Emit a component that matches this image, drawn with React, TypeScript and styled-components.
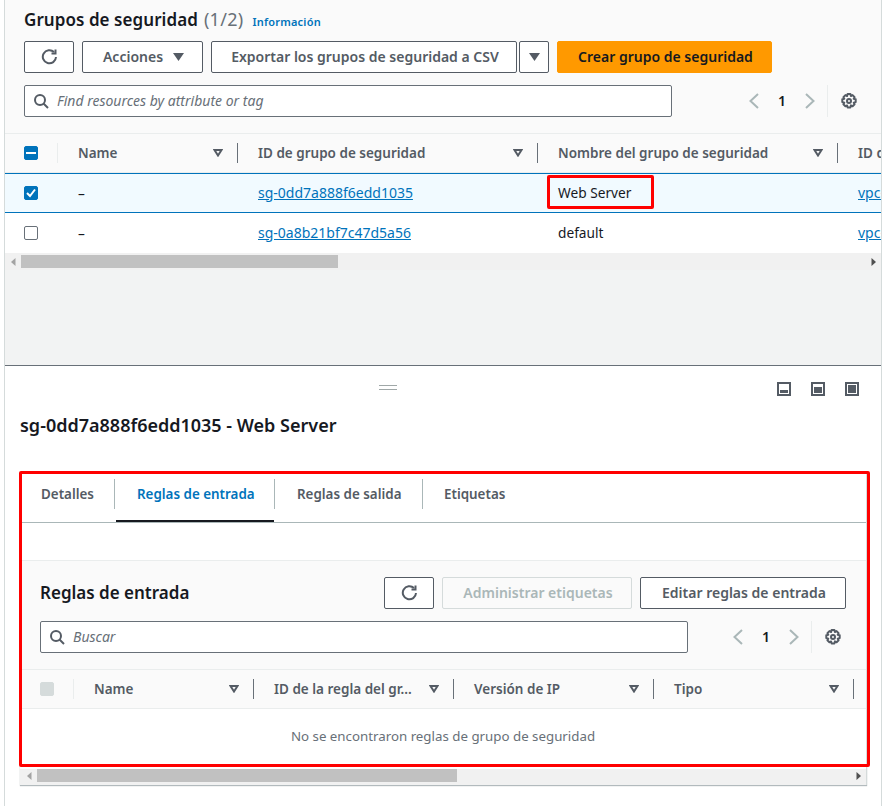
import * as React from 'react';
import styled, { createGlobalStyle } from 'styled-components';

const GlobalStyle = createGlobalStyle`
  html, body {
    margin: 0;
    padding: 0;
    background: #fff;
    font-family: "Noto Sans", "Open Sans", sans-serif;
    font-size: 14px;
    color: #16191f;
  }
`;

const Shell = styled.div`
  box-sizing: border-box;
  width: 878px;
  height: 806px;
  margin-left: 4px;
  border-left: 1px solid #d5dbdb;
  border-right: 1px solid #d5dbdb;
  overflow: hidden;
`;

const TopPanel = styled.section`
  display: flex;
  flex-direction: column;
  height: 365px;
  background: #f2f3f3;
`;

const Toolbar = styled.div`
  box-sizing: border-box;
  height: 133px;
  padding: 8px 24px 0 19px;
  background: #fafafa;
`;

const HeadingRow = styled.div`
  display: flex;
  align-items: baseline;
  height: 33px;
  line-height: 22px;
`;

const PageTitle = styled.h1`
  margin: 0;
  font-size: 17px;
  font-weight: 600;
  letter-spacing: 0.06px;
`;

const Count = styled.span`
  margin-left: 6px;
  font-size: 18px;
  letter-spacing: 0.3px;
  color: #687078;
`;

const InfoLink = styled.a`
  margin-left: 9px;
  font-size: 11px;
  font-weight: 600;
  letter-spacing: 0.2px;
  color: #0073bb;
`;

const ButtonRow = styled.div`
  display: flex;
  gap: 8px;
`;

const Button = styled.button<{ $width: number; $variant?: 'primary' | 'disabled' }>`
  box-sizing: border-box;
  display: inline-flex;
  align-items: center;
  justify-content: center;
  gap: 10px;
  width: ${(p) => p.$width}px;
  height: 32px;
  padding: 0;
  border: 1px solid ${(p) => (p.$variant === 'primary' ? '#ff9900' : p.$variant === 'disabled' ? '#d5dbdb' : '#545b64')};
  border-radius: 2px;
  background: ${(p) => (p.$variant === 'primary' ? '#ff9900' : p.$variant === 'disabled' ? '#fafafa' : '#fff')};
  color: ${(p) => (p.$variant === 'primary' ? '#16191f' : p.$variant === 'disabled' ? '#aab7b8' : '#545b64')};
  font-family: inherit;
  font-size: 14px;
  font-weight: 600;
`;

const ButtonLabel = styled.span`
  margin: 0 0 2px 2px;
`;

const SplitCaret = styled(Button)`
  margin-left: -6px;
`;

const SearchRow = styled.div<{ $end: number }>`
  display: flex;
  align-items: center;
  justify-content: space-between;
  height: 32px;
  margin-top: 12px;
  padding-right: ${(p) => p.$end}px;
`;

const SearchBox = styled.div`
  box-sizing: border-box;
  display: flex;
  align-items: center;
  gap: 8px;
  width: 648px;
  height: 32px;
  padding-left: 8px;
  border: 1px solid #687078;
  border-radius: 2px;
  background: #fff;
  font-size: 14px;
  font-style: italic;
  color: #687078;
`;

const Placeholder = styled.span`
  margin-bottom: 2px;
`;

const Pager = styled.div`
  display: flex;
  align-items: center;
  height: 32px;
  color: #aab7b8;
`;

const PageNumber = styled.span`
  width: 46px;
  margin-bottom: 2px;
  text-align: center;
  font-size: 14px;
  font-weight: 600;
  color: #16191f;
`;

const PagerDivider = styled.span`
  width: 1px;
  height: 32px;
  margin: 0 13px 0 12px;
  background: #eaeded;
`;

const Table = styled.table`
  width: 100%;
  border-collapse: separate;
  border-spacing: 0;
  table-layout: fixed;
`;

const Col = styled.col<{ $width: number }>`
  width: ${(p) => p.$width}px;
`;

const TopTableWrap = styled.div`
  margin-left: -1px;
`;

const Th = styled.th`
  box-sizing: border-box;
  height: 40px;
  padding: 0;
  border-top: 1px solid #eaeded;
  border-bottom: 1px solid #eaeded;
  background: #fafafa;
  font-size: 13.5px;
  font-weight: 600;
  text-align: left;
  color: #545b64;

  &:first-child {
    padding-left: 20px;
  }
`;

const TopFirstTh = styled(Th)`
  border-left: 1px solid #d5dbdb;

  &:first-child {
    padding-left: 19px;
  }
`;

const HeadCell = styled.div<{ $soft?: boolean; $bare?: boolean }>`
  box-sizing: border-box;
  display: flex;
  align-items: center;
  justify-content: space-between;
  height: 20px;
  padding: 0 14px 0 20px;
  border-right: ${(p) => (p.$bare ? '0' : `1px solid ${p.$soft ? '#eaeded' : '#687078'}`)};
  white-space: nowrap;
  overflow: hidden;
`;

const CheckCell = styled(HeadCell)`
  padding: 0;
`;

const Tr = styled.tr<{ $selected?: boolean }>`
  background: ${(p) => (p.$selected ? '#f1faff' : '#fff')};
`;

const Td = styled.td<{ $selected?: boolean }>`
  box-sizing: border-box;
  height: 40px;
  padding: 0 0 2px 20px;
  border-top: 1px solid ${(p) => (p.$selected ? '#0073bb' : 'transparent')};
  border-bottom: 1px solid ${(p) => (p.$selected ? '#0073bb' : 'transparent')};
  font-size: 13.7px;
  white-space: nowrap;
  overflow: hidden;
`;

const DashTd = styled(Td)`
  padding-bottom: 0;
`;

const CheckTd = styled(Td)`
  padding: 0 0 0 19px;
  border-left: 1px solid ${(p) => (p.$selected ? '#0073bb' : '#d5dbdb')};
  line-height: 0;
`;

const RowLink = styled.a`
  font-size: 14px;
  color: #0073bb;
  text-decoration: underline;
`;

const HighlightAnchor = styled.span`
  position: relative;
  display: inline-block;
`;

const HighlightBox = styled.span`
  position: absolute;
  left: -11px;
  top: -8px;
  box-sizing: border-box;
  width: 107px;
  height: 34px;
  border: 3px solid #ff0000;
  border-radius: 2px;
`;

const Box = styled.span<{ $state: 'on' | 'mixed' | 'off' | 'disabled' }>`
  box-sizing: border-box;
  display: inline-flex;
  align-items: center;
  justify-content: center;
  width: 14px;
  height: 14px;
  border-radius: 2px;
  border: 1px solid
    ${(p) => (p.$state === 'off' ? '#687078' : p.$state === 'disabled' ? '#d5dbdb' : '#0073bb')};
  background: ${(p) => (p.$state === 'off' ? '#fff' : p.$state === 'disabled' ? '#d5dbdb' : '#0073bb')};
`;

const ScrollTrack = styled.div<{ $compact?: boolean }>`
  box-sizing: border-box;
  display: flex;
  align-items: center;
  justify-content: space-between;
  height: ${(p) => (p.$compact ? 16 : 17)}px;
  padding: ${(p) => (p.$compact ? '0 0 3px 1px' : '0')};
  background: #f1f1f1;
`;

const ScrollArrow = styled.span<{ $dim?: boolean }>`
  display: flex;
  justify-content: center;
  width: 16px;
  color: ${(p) => (p.$dim ? '#a3a3a3' : '#505050')};
`;

const ScrollThumb = styled.span<{ $width: number }>`
  width: ${(p) => p.$width}px;
  height: 13px;
  margin-right: auto;
  background: #c1c1c1;
`;

const BottomPanel = styled.section`
  box-sizing: border-box;
  height: 441px;
  border-top: 1px solid #687078;
  background: #fff;
`;

const PanelControls = styled.div`
  display: flex;
  align-items: center;
  justify-content: space-between;
  height: 14px;
  padding: 16px 22px 0 374px;
`;

const DragHandle = styled.span`
  width: 18px;
  height: 3px;
  border-top: 1px solid #a0a8a8;
  border-bottom: 1px solid #a0a8a8;
  margin-top: -4px;
`;

const PanelIcons = styled.div`
  display: flex;
  gap: 20px;
`;

const DetailTitle = styled.h2`
  margin: 18px 0 36px 15px;
  font-size: 18px;
  line-height: 22px;
  font-weight: 600;
`;

const Card = styled.div`
  position: relative;
  width: 846px;
  margin-left: 15px;
  border-right: 1px solid #d5dbdb;
  box-shadow: 0 1px 1px rgba(0, 28, 36, 0.3);
`;

const CardHighlight = styled.div`
  position: absolute;
  top: -1px;
  left: -1px;
  right: -4px;
  bottom: 18px;
  border: 3px solid #ff0000;
  border-radius: 2px;
  pointer-events: none;
`;

const TabList = styled.div`
  box-sizing: border-box;
  display: flex;
  height: 51px;
  border-bottom: 1px solid #aab7b8;
`;

const Tab = styled.div<{ $width: number; $active?: boolean; $last?: boolean }>`
  position: relative;
  box-sizing: border-box;
  width: ${(p) => p.$width}px;
  padding: 14px 0 0 ${(p) => (p.$last ? 21 : 22)}px;
  font-size: 13.4px;
  font-weight: 600;
  line-height: 17px;
  color: ${(p) => (p.$active ? '#0073bb' : '#545b64')};

  &:first-child {
    padding-left: 21px;
  }

  &::after {
    content: '';
    display: ${(p) => (p.$last ? 'none' : 'block')};
    position: absolute;
    top: 7px;
    right: 0;
    width: 1px;
    height: 30px;
    background: #aab7b8;
  }

  &::before {
    content: '';
    display: ${(p) => (p.$active ? 'block' : 'none')};
    position: absolute;
    left: 1px;
    right: 1px;
    bottom: 0;
    height: 2px;
    background: #16191f;
  }
`;

const TabGap = styled.div`
  height: 37px;
`;

const RulesHeader = styled.div`
  box-sizing: border-box;
  height: 109px;
  padding: 16px 0 0 20px;
  border-top: 1px solid #eaeded;
  background: #fafafa;
`;

const RulesTop = styled.div`
  display: flex;
  align-items: center;
  justify-content: space-between;
  padding-right: 20px;
`;

const RulesTitle = styled.h3`
  margin: 0;
  padding-bottom: 2px;
  font-size: 17px;
  font-weight: 600;
`;

const EmptyCell = styled.td`
  box-sizing: border-box;
  height: 60px;
  padding: 0 0 7px;
  text-align: center;
  font-size: 13.3px;
  color: #687078;
`;

const Refresh = () => (
  <svg width="16" height="16" viewBox="0 0 16 16" fill="none" stroke="currentColor" strokeWidth="2">
    <path d="M13 3a6.6 6.600 0 1 0 2 5" />
    <path d="M14.500 0.500V4.500H10.500" strokeLinejoin="miter" />
  </svg>
);

const Caret = () => (
  <svg width="11" height="8" viewBox="0 0 11 8" fill="currentColor">
    <path d="M0 0h11L5.500 8z" />
  </svg>
);

const Magnifier = () => (
  <svg width="16" height="16" viewBox="0 0 16 16" fill="none" stroke="#545b64" strokeWidth="2">
    <circle cx="7" cy="7" r="5" />
    <path d="M10.500 10.500L15 15" />
  </svg>
);

const Chevron = ({ right }: { right?: boolean }) => (
  <svg width="10" height="16" viewBox="0 0 10 16" fill="none" stroke="currentColor" strokeWidth="2">
    <path d={right ? 'M1 1l7.500 7L1 15' : 'M9 1L1.500 8 9 15'} />
  </svg>
);

const Gear = () => (
  <svg width="16" height="16" viewBox="0 0 16 16" fill="none" stroke="#545b64" strokeWidth="2" strokeLinejoin="round">
    <circle cx="8" cy="8" r="2" />
    <path d="M6.600 1h2.800l.5 2 1.700-.9 2 2-.9 1.700 2 .5v2.800l-2 .5.9 1.700-2 2-1.700-.9-.5 2H6.600l-.5-2-1.700.9-2-2 .9-1.700-2-.5V6.300l2-.5-.9-1.700 2-2 1.700.9z" />
  </svg>
);

const SortIcon = () => (
  <svg width="10" height="8" viewBox="0 0 10 8" fill="none" stroke="#545b64" strokeWidth="2">
    <path d="M1.500 1h7L5 6.500z" />
  </svg>
);

const Check = () => (
  <svg width="10" height="10" viewBox="0 0 10 10" fill="none" stroke="#fff" strokeWidth="2">
    <path d="M1 5l3 3 5-6.500" />
  </svg>
);

const Dash = () => (
  <svg width="10" height="2" viewBox="0 0 10 2" fill="#fff">
    <path d="M0 0h10v2H0z" />
  </svg>
);

const PanelIcon = ({ fill }: { fill: 'low' | 'mid' | 'full' }) => {
  const top = fill === 'low' ? 8 : fill === 'mid' ? 5 : 3;
  return (
    <svg width="14" height="14" viewBox="0 0 14 14" fill="#545b64">
      <path fillRule="evenodd" d="M0 0h14v14H0zM2 2v10h10V2z" />
      <rect x="3" y={top} width="8" height={11 - top} />
    </svg>
  );
};

const ArrowLeft = () => (
  <svg width="5" height="8" viewBox="0 0 5 8" fill="currentColor">
    <path d="M4.500 0v8L0 4z" />
  </svg>
);

const ArrowRight = () => (
  <svg width="5" height="8" viewBox="0 0 5 8" fill="currentColor">
    <path d="M0.500 0v8L5 4z" />
  </svg>
);

const PagerBlock = () => (
  <Pager>
    <Chevron />
    <PageNumber>1</PageNumber>
    <Chevron right />
    <PagerDivider />
    <Gear />
  </Pager>
);

const HeadLabel = ({ label }: { label: string }) => (
  <HeadCell>
    <span>{label}</span>
    <SortIcon />
  </HeadCell>
);

const groups = [
  { id: 'sg-0dd7a888f6edd1035', name: 'Web Server', selected: true },
  { id: 'sg-0a8b21bf7c47d5a56', name: 'default', selected: false },
];

export default function App() {
  return (
    <>
      <GlobalStyle />
      <Shell>
        <TopPanel>
          <Toolbar>
            <HeadingRow>
              <PageTitle>Grupos de seguridad</PageTitle>
              <Count>(1/2)</Count>
              <InfoLink>Información</InfoLink>
            </HeadingRow>
            <ButtonRow>
              <Button $width={50}><Refresh /></Button>
              <Button $width={121}><ButtonLabel>Acciones</ButtonLabel> <Caret /></Button>
              <Button $width={306}><ButtonLabel>Exportar los grupos de seguridad a CSV</ButtonLabel></Button>
              <SplitCaret $width={30}><Caret /></SplitCaret>
              <Button $width={215} $variant="primary"><ButtonLabel>Crear grupo de seguridad</ButtonLabel></Button>
            </ButtonRow>
            <SearchRow $end={0}>
              <SearchBox><Magnifier /><Placeholder>Find resources by attribute or tag</Placeholder></SearchBox>
              <PagerBlock />
            </SearchRow>
          </Toolbar>
          <TopTableWrap>
            <Table>
              <colgroup>
                <Col $width={54} />
                <Col $width={180} />
                <Col $width={300} />
                <Col $width={300} />
                <col />
              </colgroup>
              <thead>
                <tr>
                  <TopFirstTh>
                    <CheckCell $soft><Box $state="mixed"><Dash /></Box></CheckCell>
                  </TopFirstTh>
                  <Th><HeadLabel label="Name" /></Th>
                  <Th><HeadLabel label="ID de grupo de seguridad" /></Th>
                  <Th><HeadLabel label="Nombre del grupo de seguridad" /></Th>
                  <Th><HeadCell $bare>ID de VPC</HeadCell></Th>
                </tr>
              </thead>
              <tbody>
                {groups.map(({ id, name, selected }) => (
                  <Tr key={id} $selected={selected}>
                    <CheckTd $selected={selected}>
                      <Box $state={selected ? 'on' : 'off'}>{selected && <Check />}</Box>
                    </CheckTd>
                    <DashTd $selected={selected}>–</DashTd>
                    <Td $selected={selected}><RowLink>{id}</RowLink></Td>
                    <Td $selected={selected}>
                      {selected ? (
                        <HighlightAnchor>{name}<HighlightBox /></HighlightAnchor>
                      ) : name}
                    </Td>
                    <Td $selected={selected}><RowLink>vpc-0c4</RowLink></Td>
                  </Tr>
                ))}
              </tbody>
            </Table>
          </TopTableWrap>
          <ScrollTrack>
            <ScrollArrow $dim><ArrowLeft /></ScrollArrow>
            <ScrollThumb $width={317} />
            <ScrollArrow><ArrowRight /></ScrollArrow>
          </ScrollTrack>
        </TopPanel>

        <BottomPanel>
          <PanelControls>
            <DragHandle />
            <PanelIcons>
              <PanelIcon fill="low" />
              <PanelIcon fill="mid" />
              <PanelIcon fill="full" />
            </PanelIcons>
          </PanelControls>
          <DetailTitle>sg-0dd7a888f6edd1035 - Web Server</DetailTitle>
          <Card>
            <TabList>
              <Tab $width={95}>Detalles</Tab>
              <Tab $width={160} $active>Reglas de entrada</Tab>
              <Tab $width={148}>Reglas de salida</Tab>
              <Tab $width={120} $last>Etiquetas</Tab>
            </TabList>
            <TabGap />
            <RulesHeader>
              <RulesTop>
                <RulesTitle>Reglas de entrada</RulesTitle>
                <ButtonRow>
                  <Button $width={50}><Refresh /></Button>
                  <Button $width={190} $variant="disabled"><ButtonLabel>Administrar etiquetas</ButtonLabel></Button>
                  <Button $width={206}><ButtonLabel>Editar reglas de entrada</ButtonLabel></Button>
                </ButtonRow>
              </RulesTop>
              <SearchRow $end={25}>
                <SearchBox><Magnifier /><Placeholder>Buscar</Placeholder></SearchBox>
                <PagerBlock />
              </SearchRow>
            </RulesHeader>
            <Table>
              <colgroup>
                <Col $width={54} />
                <Col $width={180} />
                <Col $width={200} />
                <Col $width={200} />
                <Col $width={200} />
                <col />
              </colgroup>
              <thead>
                <tr>
                  <Th>
                    <CheckCell $soft><Box $state="disabled" /></CheckCell>
                  </Th>
                  <Th><HeadLabel label="Name" /></Th>
                  <Th><HeadLabel label="ID de la regla del gr..." /></Th>
                  <Th><HeadLabel label="Versión de IP" /></Th>
                  <Th><HeadLabel label="Tipo" /></Th>
                  <Th />
                </tr>
              </thead>
              <tbody>
                <tr>
                  <EmptyCell colSpan={6}>No se encontraron reglas de grupo de seguridad</EmptyCell>
                </tr>
              </tbody>
            </Table>
            <ScrollTrack $compact>
              <ScrollArrow $dim><ArrowLeft /></ScrollArrow>
              <ScrollThumb $width={420} />
              <ScrollArrow><ArrowRight /></ScrollArrow>
            </ScrollTrack>
            <CardHighlight />
          </Card>
        </BottomPanel>
      </Shell>
    </>
  );
}
